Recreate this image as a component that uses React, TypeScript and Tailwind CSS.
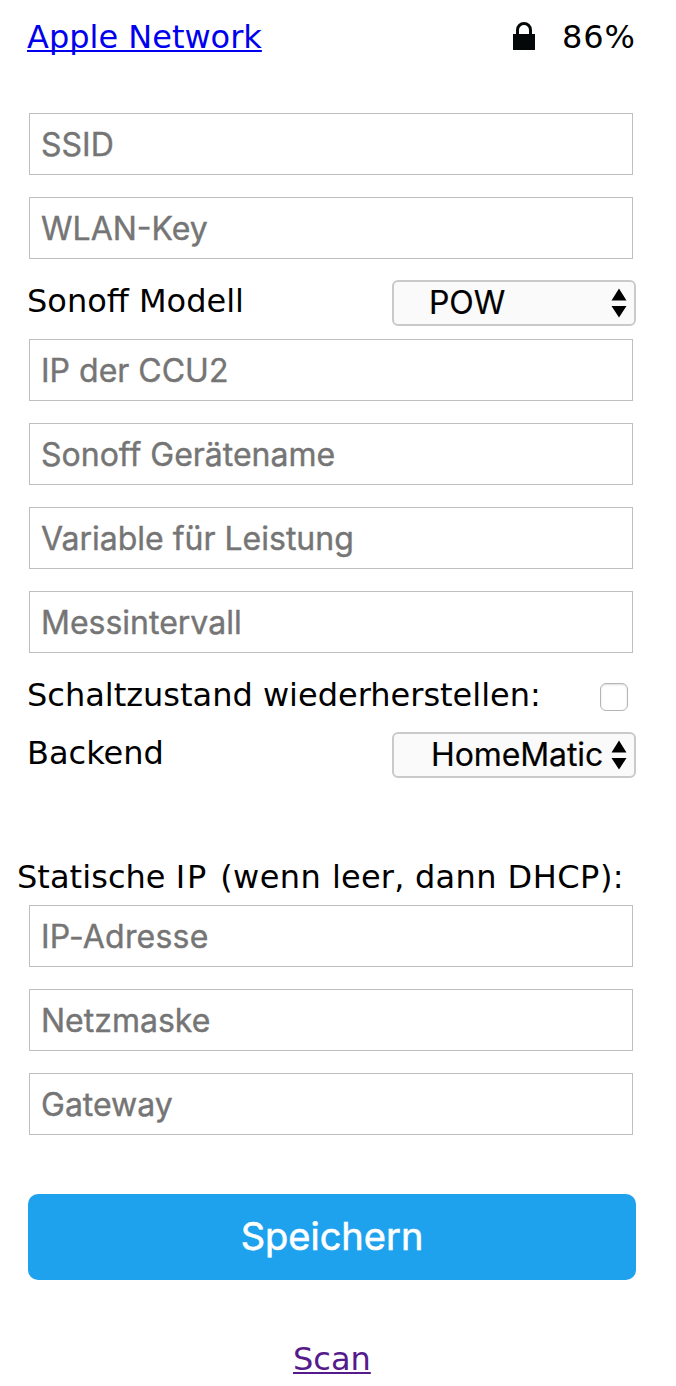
import React from "react";

function Field({ label, className = "" }: { label: string; className?: string }) {
  return (
    <input
      aria-label={label}
      placeholder={label}
      className={`ml-[29px] block h-[62px] w-[604px] shrink-0 border border-[#bfbfbf] bg-white px-[11px] font-['Inter',sans-serif] text-[32px] text-black [-webkit-text-stroke:0.4px_#757575] placeholder:text-[#757575] placeholder:opacity-100 ${className}`}
    />
  );
}

function Picker({ value, pad }: { value: string; pad: string }) {
  return (
    <button className={`flex h-[46px] w-[244px] items-center justify-between rounded-[6px] border-2 border-[#cacaca] bg-[#fafafa] pr-[7px] font-['Inter',sans-serif] text-[32px] leading-[40px] tracking-[-0.1px] text-black [-webkit-text-stroke:0.2px_black] ${pad}`}>
      <span className="whitespace-nowrap">{value}</span>
      <svg width="16" height="30" viewBox="0 0 16 30" className="shrink-0">
        <path d="M8 .5L15.5 12.5H.5ZM8 29.5L.5 18H15.5Z" fill="black" />
      </svg>
    </button>
  );
}

export default function App() {
  return (
    <main className="flex h-[1386px] w-[676px] flex-col overflow-hidden bg-white font-['DejaVu_Sans',sans-serif] text-[32px] leading-[40px] text-black">
      <header className="flex h-[113px] shrink-0 items-start pl-[27px] pr-[40px] pt-[17px]">
        <a href="#" className="text-[#0000ee] underline decoration-2 underline-offset-[2px] [text-decoration-skip-ink:none]">Apple Network</a>
        <svg width="24" height="30" viewBox="0 0 24 30" className="ml-auto mt-[4px]">
          <path d="M1 13H23V29H1Z" fill="#050808" />
          <path d="M5.5 13V9a6.5 6.5 0 0 1 13 0v4" fill="none" stroke="#050808" strokeWidth="3" />
        </svg>
        <span className="ml-[26px] tracking-[1px]">86%</span>
      </header>
      <Field label="SSID" />
      <Field label="WLAN-Key" className="mt-[22px]" />
      <div className="flex h-[80px] shrink-0 items-start justify-between pl-[27px] pr-[40px] pt-[21px]">
        <span className="mt-px">Sonoff Modell</span>
        <Picker value="POW" pad="pl-[35px]" />
      </div>
      <Field label="IP der CCU2" />
      <Field label="Sonoff Gerätename" className="mt-[22px]" />
      <Field label="Variable für Leistung" className="mt-[22px]" />
      <Field label="Messintervall" className="mt-[22px]" />
      <label className="flex h-[58px] shrink-0 items-start justify-between pl-[27px] pr-[48px] pt-[22px]">
        <span>Schaltzustand wiederherstellen:</span>
        <input type="checkbox" className="mt-[8px] size-[28px] appearance-none rounded-[6px] border border-[#b5b5b5] bg-white shadow-[inset_0_1px_2px_#dddddd]" />
      </label>
      <div className="flex h-[146px] shrink-0 items-start justify-between pl-[27px] pr-[40px] pt-[21px]">
        <span className="mt-px">Backend</span>
        <Picker value="HomeMatic" pad="pl-[37px]" />
      </div>
      <div className="h-[48px] shrink-0 whitespace-nowrap pl-[17px]">
        <span className="tracking-[0.05px]">Statische </span>
        <span className="tracking-[1.8px]">IP </span>
        <span className="tracking-[0.45px]">(wenn </span>
        <span className="tracking-[0.2px]">leer, </span>
        <span className="tracking-[0.4px]">dann </span>
        <span className="tracking-[0.5px]">DHCP):</span>
      </div>
      <Field label="IP-Adresse" className="tracking-[0.2px]" />
      <Field label="Netzmaske" className="mt-[22px]" />
      <Field label="Gateway" className="mt-[22px]" />
      <button className="ml-[28px] mt-[59px] h-[86px] w-[608px] shrink-0 rounded-[10px] bg-[#1fa2ee] pb-[2px] font-['Inter',sans-serif] text-[38px] text-white [-webkit-text-stroke:0.6px_white]">Speichern</button>
      <a href="#" className="ml-[293px] mt-[59px] self-start text-[#551a8b] underline decoration-2 underline-offset-[2px] [text-decoration-skip-ink:none]">Scan</a>
    </main>
  );
}
